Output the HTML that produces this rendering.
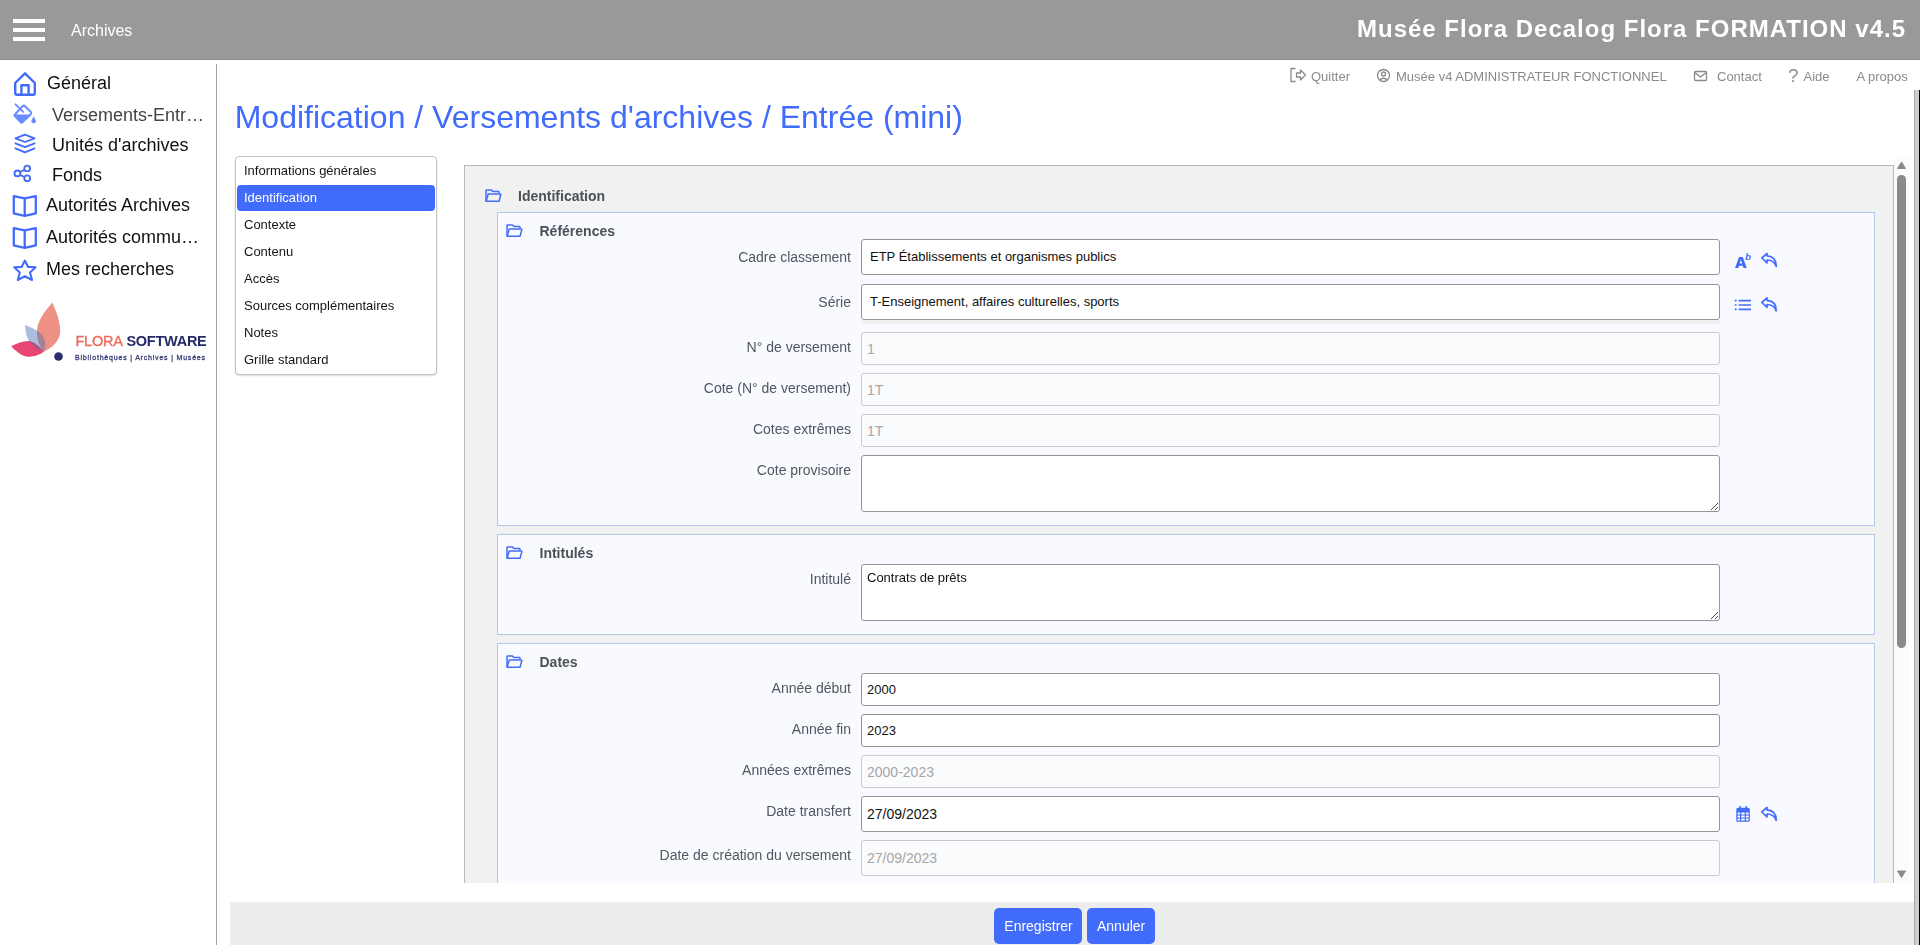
<!DOCTYPE html>
<html><head><meta charset="utf-8"><title>Flora</title>
<style>
html,body{margin:0;padding:0;}
body{width:1920px;height:945px;overflow:hidden;position:relative;background:#fff;font-family:"Liberation Sans",sans-serif;}
.t{position:absolute;white-space:nowrap;}
svg{overflow:visible}
</style></head><body>
<div style="position:absolute;left:0;top:0;width:1920px;height:60px;background:#999;"></div>
<div style="position:absolute;left:0;top:59px;width:1920px;height:1px;background:#8f8f8f;"></div>
<div style="position:absolute;left:13px;top:19px;width:32px;height:4px;background:#fff;"></div>
<div style="position:absolute;left:13px;top:28px;width:32px;height:4px;background:#fff;"></div>
<div style="position:absolute;left:13px;top:37px;width:32px;height:4px;background:#fff;"></div>
<div class="t" style="left:71px;top:23.46px;font-size:16px;line-height:16px;color:#fff;font-weight:normal;">Archives</div>

<div class="t" style="right:14px;top:16.68px;font-size:24px;line-height:24px;color:#fff;font-weight:bold;letter-spacing:1.0px;">Musée Flora Decalog Flora FORMATION v4.5</div>

<div style="position:absolute;left:216px;top:64px;width:1px;height:881px;background:#a3a3a3;"></div>
<div class="t" style="left:47px;top:73.76px;font-size:18px;line-height:18px;color:#111;font-weight:normal;">Général</div>

<div class="t" style="left:52px;top:105.76px;font-size:18px;line-height:18px;color:#444;font-weight:normal;">Versements-Entr…</div>

<div class="t" style="left:52px;top:135.76px;font-size:18px;line-height:18px;color:#111;font-weight:normal;">Unités d'archives</div>

<div class="t" style="left:52px;top:165.76px;font-size:18px;line-height:18px;color:#111;font-weight:normal;">Fonds</div>

<div class="t" style="left:46px;top:195.76px;font-size:18px;line-height:18px;color:#111;font-weight:normal;">Autorités Archives</div>

<div class="t" style="left:46px;top:227.76px;font-size:18px;line-height:18px;color:#111;font-weight:normal;">Autorités commu…</div>

<div class="t" style="left:46px;top:259.76px;font-size:18px;line-height:18px;color:#111;font-weight:normal;">Mes recherches</div>

<svg style="position:absolute;left:0;top:0" width="216" height="380" viewBox="0 0 216 380">
<g fill="none" stroke="#436cfb" stroke-width="2.4" stroke-linejoin="round" stroke-linecap="round">
 <path d="M17 94.8 Q15.2 94.8 15.2 93 V83 L25 73.3 L34.8 83 V93 Q34.8 94.8 33 94.8 Z"/>
 <path d="M21.4 94.8 V85.2 H28.6 V94.8"/>
</g>
<g fill="none" stroke="#6a8cff" stroke-width="2" stroke-linejoin="round" stroke-linecap="round">
 <path d="M15.6 104.4 L23.2 111.9"/>
 <path d="M22.6 106.2 Q23.8 105 25 106.2 L30.6 111.8 Q31.8 113 30.6 114.2 L22.8 121.9 Q21.6 123.1 20.4 121.9 L15.1 116.6 Q13.9 115.4 15.1 114.2 Z"/>
</g>
<path d="M14.6 115.2 L29.9 115.2 L21.6 123 Z" fill="#6a8cff" stroke="#6a8cff" stroke-width="1.5" stroke-linejoin="round"/>
<path d="M33.6 116.3 L35.6 119.9 Q36.4 121.6 35.5 122.6 Q33.6 124.2 31.7 122.6 Q30.8 121.6 31.6 119.9 Z" fill="#6a8cff"/>
<g fill="none" stroke="#436cfb" stroke-width="1.8" stroke-linejoin="round" stroke-linecap="round">
 <path d="M25 134.6 L34.6 138.3 L25 142 L15.4 138.3 Z"/>
 <path d="M15.4 143.3 L25 147.2 L34.6 143.3"/>
 <path d="M15.4 148.3 L25 152.4 L34.6 148.3"/>
</g>
<g fill="none" stroke="#436cfb" stroke-width="1.9">
 <circle cx="27.2" cy="168.5" r="2.9"/>
 <circle cx="17.4" cy="173.4" r="2.9"/>
 <circle cx="27.2" cy="178.3" r="2.9"/>
 <path d="M20 172 L24.6 169.8 M20 174.8 L24.6 177"/>
</g>
<g fill="none" stroke="#436cfb" stroke-width="2.3" stroke-linejoin="round">
 <path d="M13.8 196.2 L24.7 198.4 L35.8 196.2 V213.4 L24.7 215.8 L13.8 213.4 Z"/>
 <path d="M24.7 198.4 V215.8"/>
 <path d="M13.8 228.2 L24.7 230.4 L35.8 228.2 V245.4 L24.7 247.8 L13.8 245.4 Z"/>
 <path d="M24.7 230.4 V247.8"/>
</g>
<path fill="none" stroke="#436cfb" stroke-width="2.1" stroke-linejoin="round" d="M24.9 260.6 L28.1 266.9 L35.6 267.3 L30 272.6 L32 280 L24.9 276.2 L17.8 280 L19.8 272.6 L14.2 267.3 L21.7 266.9 Z"/>
</svg>
<svg style="position:absolute;left:0;top:290px" width="216" height="80" viewBox="0 290 216 80">
 <path d="M52.4 302.5 C48 308 38 318 37 330 C36.5 340 40 347 43.7 351.8 C52 348 60 341 60.2 331 C60.3 320 55 309 52.4 302.5 Z" fill="#ef9084"/>
 <path d="M11.1 346.3 C17 343.5 23 341 28 341 C34 341.5 40 346 43.7 351.8 C40 354.5 35 356.8 28 356.8 C21 356.5 15 350 11.1 346.3 Z" fill="#e94573"/>
 <path d="M25.1 324.9 C30 327 38 330 42 335 C46 340 46 347 43.7 351.8 C36 348 30 344 28 339 C26 335 25.3 330 25.1 324.9 Z" fill="#98acd6" style="mix-blend-mode:multiply" fill-opacity="0.7"/>
 <path d="M25.1 324.9 C30 327 38 330 42 335 C46 340 46 347 43.7 351.8 C36 348 30 344 28 339 C26 335 25.3 330 25.1 324.9 Z" fill="#98acd6" fill-opacity="0.3"/>
 <circle cx="58.5" cy="356.5" r="4.3" fill="#2b2e6c"/>
</svg>
<div class="t" style="left:75.5px;top:333.73px;font-size:14.5px;line-height:14.5px;color:#262b68;font-weight:bold;letter-spacing:-0.25px;"><span style="color:#ee6a5c;font-weight:normal;-webkit-text-stroke:0.35px #ee6a5c">FLORA</span> <span style="color:#262b68">SOFTWARE</span></div>

<div class="t" style="left:75px;top:353.57px;font-size:7px;line-height:7px;color:#3a3d78;font-weight:normal;letter-spacing:0.8px;-webkit-text-stroke:0.3px #3a3d78;">Bibliothèques | Archives | Musées</div>

<div class="t" style="left:1311px;top:70.00px;font-size:13px;line-height:13px;color:#8a8a8a;font-weight:normal;">Quitter</div>

<div class="t" style="left:1396px;top:70.00px;font-size:13px;line-height:13px;color:#8a8a8a;font-weight:normal;">Musée v4 ADMINISTRATEUR FONCTIONNEL</div>

<div class="t" style="left:1717px;top:70.00px;font-size:13px;line-height:13px;color:#8a8a8a;font-weight:normal;">Contact</div>

<div class="t" style="left:1788px;top:65.92px;font-size:19px;line-height:19px;color:#8a8a8a;font-weight:normal;">?</div>

<div class="t" style="left:1803.5px;top:70.00px;font-size:13px;line-height:13px;color:#8a8a8a;font-weight:normal;">Aide</div>

<div class="t" style="left:1856.5px;top:70.00px;font-size:13px;line-height:13px;color:#8a8a8a;font-weight:normal;">A propos</div>

<svg style="position:absolute;left:1280px;top:62px" width="440" height="30" viewBox="1280 62 440 30">
<g fill="none" stroke="#8a8a8a" stroke-width="1.3" stroke-linejoin="round">
 <path d="M1295.5 68.5 H1291 V81.5 H1295.5"/>
 <path d="M1296.5 73 H1300.5 V70 L1305.5 75 L1300.5 80 V77 H1296.5 Z"/>
 <circle cx="1383.5" cy="75.5" r="6"/>
 <circle cx="1383.5" cy="74" r="2"/>
 <path d="M1379.5 80 Q1383.5 76.5 1387.5 80"/>
 <rect x="1694.5" y="71.5" width="12" height="9" rx="1"/>
 <path d="M1694.8 72.5 L1700.5 77 L1706.2 72.5"/>
</g></svg>
<div class="t" style="left:234.7px;top:100.91px;font-size:32px;line-height:32px;color:#416bfb;font-weight:normal;">Modification / Versements d'archives / Entrée (mini)</div>

<div style="position:absolute;left:235px;top:156px;width:200px;height:217px;border:1px solid #c4c4c4;border-radius:4px;box-shadow:0 1px 2px rgba(0,0,0,0.15);background:#fff;"></div>
<div style="position:absolute;left:237px;top:185px;width:198px;height:26px;border-radius:4px;background:#416bfb;"></div>
<div class="t" style="left:244px;top:164.00px;font-size:13px;line-height:13px;color:#141414;font-weight:normal;">Informations générales</div>

<div class="t" style="left:244px;top:191.00px;font-size:13px;line-height:13px;color:#fff;font-weight:normal;">Identification</div>

<div class="t" style="left:244px;top:218.00px;font-size:13px;line-height:13px;color:#141414;font-weight:normal;">Contexte</div>

<div class="t" style="left:244px;top:245.00px;font-size:13px;line-height:13px;color:#141414;font-weight:normal;">Contenu</div>

<div class="t" style="left:244px;top:272.00px;font-size:13px;line-height:13px;color:#141414;font-weight:normal;">Accès</div>

<div class="t" style="left:244px;top:299.00px;font-size:13px;line-height:13px;color:#141414;font-weight:normal;">Sources complémentaires</div>

<div class="t" style="left:244px;top:326.00px;font-size:13px;line-height:13px;color:#141414;font-weight:normal;">Notes</div>

<div class="t" style="left:244px;top:353.00px;font-size:13px;line-height:13px;color:#141414;font-weight:normal;">Grille standard</div>

<div style="position:absolute;left:464px;top:165px;width:1428px;height:717px;border:1px solid #bababa;border-bottom:none;background:#f1f1f1;overflow:hidden;">
<div style="position:absolute;left:32px;top:46px;width:1376px;height:312px;border:1px solid #b2c9e8;background:#f8faff;"></div>
<div style="position:absolute;left:32px;top:368px;width:1376px;height:99px;border:1px solid #b2c9e8;background:#f8faff;"></div>
<div style="position:absolute;left:32px;top:477px;width:1376px;height:356px;border:1px solid #b2c9e8;background:#f8faff;"></div>
</div>
<svg style="position:absolute;left:485px;top:189px" width="17" height="14" viewBox="0 0 17 14"><g fill="none" stroke="#436cfb" stroke-width="1.5" stroke-linejoin="round"><path d="M1 12.2 V1.6 Q1 0.9 1.7 0.9 H6.5 L8 2.6 H13.3 Q14 2.6 14 3.3 V4.6"/><path d="M1.1 12.3 L3.3 4.9 H15.2 Q16 4.9 15.8 5.7 L14 12.3 Z"/></g></svg>
<svg style="position:absolute;left:506px;top:224px" width="17" height="14" viewBox="0 0 17 14"><g fill="none" stroke="#436cfb" stroke-width="1.5" stroke-linejoin="round"><path d="M1 12.2 V1.6 Q1 0.9 1.7 0.9 H6.5 L8 2.6 H13.3 Q14 2.6 14 3.3 V4.6"/><path d="M1.1 12.3 L3.3 4.9 H15.2 Q16 4.9 15.8 5.7 L14 12.3 Z"/></g></svg>
<svg style="position:absolute;left:506px;top:546px" width="17" height="14" viewBox="0 0 17 14"><g fill="none" stroke="#436cfb" stroke-width="1.5" stroke-linejoin="round"><path d="M1 12.2 V1.6 Q1 0.9 1.7 0.9 H6.5 L8 2.6 H13.3 Q14 2.6 14 3.3 V4.6"/><path d="M1.1 12.3 L3.3 4.9 H15.2 Q16 4.9 15.8 5.7 L14 12.3 Z"/></g></svg>
<svg style="position:absolute;left:506px;top:655px" width="17" height="14" viewBox="0 0 17 14"><g fill="none" stroke="#436cfb" stroke-width="1.5" stroke-linejoin="round"><path d="M1 12.2 V1.6 Q1 0.9 1.7 0.9 H6.5 L8 2.6 H13.3 Q14 2.6 14 3.3 V4.6"/><path d="M1.1 12.3 L3.3 4.9 H15.2 Q16 4.9 15.8 5.7 L14 12.3 Z"/></g></svg>
<div class="t" style="left:518px;top:189.15px;font-size:14px;line-height:14px;color:#4b5157;font-weight:bold;">Identification</div>

<div class="t" style="left:539.5px;top:224.15px;font-size:14px;line-height:14px;color:#4b5157;font-weight:bold;">Références</div>

<div class="t" style="left:539.5px;top:546.15px;font-size:14px;line-height:14px;color:#4b5157;font-weight:bold;">Intitulés</div>

<div class="t" style="left:539.5px;top:655.15px;font-size:14px;line-height:14px;color:#4b5157;font-weight:bold;">Dates</div>

<div class="t" style="right:1069px;top:250.15px;font-size:14px;line-height:14px;color:#51575e;font-weight:normal;">Cadre classement</div>
<div style="position:absolute;left:861px;top:239px;width:857px;height:34px;border:1px solid #959595;border-radius:3px;background:#fff;"></div><div class="t" style="left:870px;top:249.50px;font-size:13px;line-height:13px;color:#111;font-weight:normal;">ETP Établissements et organismes publics</div>

<div class="t" style="right:1069px;top:295.15px;font-size:14px;line-height:14px;color:#51575e;font-weight:normal;">Série</div>
<div style="position:absolute;left:861px;top:284px;width:857px;height:34px;border:1px solid #959595;border-radius:3px;background:#fff;"></div><div class="t" style="left:870px;top:295.00px;font-size:13px;line-height:13px;color:#111;font-weight:normal;">T-Enseignement, affaires culturelles, sports</div>

<div style="position:absolute;left:861px;top:320px;width:859px;height:4px;background:#f1f1f2;"></div>
<div class="t" style="right:1069px;top:340.15px;font-size:14px;line-height:14px;color:#51575e;font-weight:normal;">N° de versement</div>
<div style="position:absolute;left:861px;top:332px;width:857px;height:31px;border:1px solid #c9cbce;border-radius:3px;background:#fafbfd;"></div><div class="t" style="left:867px;top:342.15px;font-size:14px;line-height:14px;color:#a6a6a6;font-weight:normal;">1</div>

<div class="t" style="right:1069px;top:381.15px;font-size:14px;line-height:14px;color:#51575e;font-weight:normal;">Cote (N° de versement)</div>
<div style="position:absolute;left:861px;top:373px;width:857px;height:31px;border:1px solid #c9cbce;border-radius:3px;background:#fafbfd;"></div><div class="t" style="left:867px;top:383.15px;font-size:14px;line-height:14px;color:#a6a6a6;font-weight:normal;">1T</div>

<div class="t" style="right:1069px;top:422.15px;font-size:14px;line-height:14px;color:#51575e;font-weight:normal;">Cotes extrêmes</div>
<div style="position:absolute;left:861px;top:414px;width:857px;height:31px;border:1px solid #c9cbce;border-radius:3px;background:#fafbfd;"></div><div class="t" style="left:867px;top:424.15px;font-size:14px;line-height:14px;color:#a6a6a6;font-weight:normal;">1T</div>

<div class="t" style="right:1069px;top:463.15px;font-size:14px;line-height:14px;color:#51575e;font-weight:normal;">Cote provisoire</div>
<div style="position:absolute;left:861px;top:455px;width:857px;height:55px;border:1px solid #959595;border-radius:3px;background:#fff;"></div><svg style="position:absolute;left:0;top:0" width="1920" height="945" viewBox="0 0 1920 945" shape-rendering="crispEdges"><g fill="#4a4a4a"><rect x="1711" y="509" width="1" height="1"/><rect x="1712" y="508" width="1" height="1"/><rect x="1713" y="507" width="1" height="1"/><rect x="1714" y="506" width="1" height="1"/><rect x="1715" y="505" width="1" height="1"/><rect x="1716" y="504" width="1" height="1"/><rect x="1717" y="503" width="1" height="1"/><rect x="1715" y="509" width="1" height="1"/><rect x="1716" y="508" width="1" height="1"/><rect x="1717" y="507" width="1" height="1"/></g></svg>
<div class="t" style="right:1069px;top:572.15px;font-size:14px;line-height:14px;color:#51575e;font-weight:normal;">Intitulé</div>
<div style="position:absolute;left:861px;top:564px;width:857px;height:55px;border:1px solid #959595;border-radius:3px;background:#fff;"></div><svg style="position:absolute;left:0;top:0" width="1920" height="945" viewBox="0 0 1920 945" shape-rendering="crispEdges"><g fill="#4a4a4a"><rect x="1711" y="618" width="1" height="1"/><rect x="1712" y="617" width="1" height="1"/><rect x="1713" y="616" width="1" height="1"/><rect x="1714" y="615" width="1" height="1"/><rect x="1715" y="614" width="1" height="1"/><rect x="1716" y="613" width="1" height="1"/><rect x="1717" y="612" width="1" height="1"/><rect x="1715" y="618" width="1" height="1"/><rect x="1716" y="617" width="1" height="1"/><rect x="1717" y="616" width="1" height="1"/></g></svg><div class="t" style="left:867px;top:571.00px;font-size:13px;line-height:13px;color:#111;font-weight:normal;">Contrats de prêts</div>

<div class="t" style="right:1069px;top:681.15px;font-size:14px;line-height:14px;color:#51575e;font-weight:normal;">Année début</div>
<div style="position:absolute;left:861px;top:673px;width:857px;height:31px;border:1px solid #959595;border-radius:3px;background:#fff;"></div><div class="t" style="left:867px;top:683.00px;font-size:13px;line-height:13px;color:#111;font-weight:normal;">2000</div>

<div class="t" style="right:1069px;top:722.15px;font-size:14px;line-height:14px;color:#51575e;font-weight:normal;">Année fin</div>
<div style="position:absolute;left:861px;top:714px;width:857px;height:31px;border:1px solid #959595;border-radius:3px;background:#fff;"></div><div class="t" style="left:867px;top:724.00px;font-size:13px;line-height:13px;color:#111;font-weight:normal;">2023</div>

<div class="t" style="right:1069px;top:763.15px;font-size:14px;line-height:14px;color:#51575e;font-weight:normal;">Années extrêmes</div>
<div style="position:absolute;left:861px;top:755px;width:857px;height:31px;border:1px solid #c9cbce;border-radius:3px;background:#fafbfd;"></div><div class="t" style="left:867px;top:765.15px;font-size:14px;line-height:14px;color:#a6a6a6;font-weight:normal;">2000-2023</div>

<div class="t" style="right:1069px;top:804.15px;font-size:14px;line-height:14px;color:#51575e;font-weight:normal;">Date transfert</div>
<div style="position:absolute;left:861px;top:796px;width:857px;height:34px;border:1px solid #959595;border-radius:3px;background:#fff;"></div><div class="t" style="left:867px;top:807.15px;font-size:14px;line-height:14px;color:#111;font-weight:normal;">27/09/2023</div>

<div class="t" style="right:1069px;top:848.15px;font-size:14px;line-height:14px;color:#51575e;font-weight:normal;">Date de création du versement</div>
<div style="position:absolute;left:861px;top:840px;width:857px;height:34px;border:1px solid #c9cbce;border-radius:3px;background:#fafbfd;"></div><div class="t" style="left:867px;top:851.15px;font-size:14px;line-height:14px;color:#a6a6a6;font-weight:normal;">27/09/2023</div>

<svg style="position:absolute;left:1725px;top:245px" width="60" height="600" viewBox="1725 245 60 600">
<path fill-rule="evenodd" fill="#436cfb" d="M1735 268 L1739.1 257 H1742.7 L1746.8 268 H1743.5 L1742.8 265.8 H1739 L1738.3 268 Z M1739.7 263.4 H1742.1 L1740.9 259.6 Z"/>
<text x="1745.2" y="259.8" font-family="Liberation Sans" font-style="italic" font-weight="bold" font-size="9.5" fill="#436cfb">b</text>
<path d="M1761.8 258 L1767 253.39999999999998 V255.79999999999995 Q1776.6 256.6 1776.2 266.4 Q1774 260 1767 260 V262.79999999999995 Z" fill="none" stroke="#436cfb" stroke-width="1.7" stroke-linejoin="round"/>
<path d="M1761.8 302.5 L1767 297.9 V300.29999999999995 Q1776.6 301.1 1776.2 310.9 Q1774 304.5 1767 304.5 V307.29999999999995 Z" fill="none" stroke="#436cfb" stroke-width="1.7" stroke-linejoin="round"/>
<path d="M1761.8 812 L1767 807.4 V809.8 Q1776.6 810.6 1776.2 820.4 Q1774 814 1767 814 V816.8 Z" fill="none" stroke="#436cfb" stroke-width="1.7" stroke-linejoin="round"/>
<g stroke="#436cfb" stroke-width="1.7">
 <path d="M1738.6 300.6 H1751 M1738.6 305 H1751 M1738.6 309.4 H1751"/>
 <path d="M1734.8 300.6 H1736.6 M1734.8 305 H1736.6 M1734.8 309.4 H1736.6"/>
</g>
<rect x="1736.3" y="807.8" width="13.5" height="14" rx="1.6" fill="#436cfb"/>
<path d="M1740.2 806 V809 M1746.2 806 V809" stroke="#436cfb" stroke-width="1.5"/>
<rect x="1737.6" y="812.4" width="2.4" height="2.1" rx="0.6" fill="#fff"/><rect x="1741.2" y="812.4" width="3.6" height="2.1" rx="0.6" fill="#fff"/><rect x="1746" y="812.4" width="2.6" height="2.1" rx="0.6" fill="#fff"/><rect x="1737.6" y="815.4" width="2.4" height="2.1" rx="0.6" fill="#fff"/><rect x="1741.2" y="815.4" width="3.6" height="2.1" rx="0.6" fill="#fff"/><rect x="1746" y="815.4" width="2.6" height="2.1" rx="0.6" fill="#fff"/><rect x="1737.6" y="818.4" width="2.4" height="2.1" rx="0.6" fill="#fff"/><rect x="1741.2" y="818.4" width="3.6" height="2.1" rx="0.6" fill="#fff"/><rect x="1746" y="818.4" width="2.6" height="2.1" rx="0.6" fill="#fff"/>
</svg>
<div style="position:absolute;left:1894px;top:157px;width:15px;height:725px;background:#fbfbfb;"></div>
<svg style="position:absolute;left:1894px;top:157px" width="15" height="725" viewBox="0 0 15 725"><path d="M3.5 11.5 L7.5 5 L11.5 11.5 Z" fill="#8a8a8a" stroke="#8a8a8a" stroke-width="1" stroke-linejoin="round"/><path d="M3.5 714 L7.5 720.5 L11.5 714 Z" fill="#8a8a8a" stroke="#8a8a8a" stroke-width="1" stroke-linejoin="round"/></svg>
<div style="position:absolute;left:1897px;top:175px;width:9px;height:473px;border-radius:4.5px;background:#8a8a8a;"></div>
<div style="position:absolute;left:1914px;top:90px;width:1px;height:855px;background:#a8a8a8;"></div>
<div style="position:absolute;left:1915px;top:90px;width:4px;height:855px;background:#cdcdcd;"></div>
<div style="position:absolute;left:1919px;top:90px;width:1px;height:855px;background:#000;"></div>
<div style="position:absolute;left:230px;top:902px;width:1684px;height:43px;background:#ececec;"></div>
<div style="position:absolute;left:994px;top:908px;width:88px;height:36px;border-radius:5px;background:#416bfb;"></div>
<div style="position:absolute;left:1087px;top:908px;width:68px;height:36px;border-radius:5px;background:#416bfb;"></div>
<div class="t" style="left:1004.3px;top:919.15px;font-size:14px;line-height:14px;color:#fff;font-weight:normal;">Enregistrer</div>

<div class="t" style="left:1097px;top:919.15px;font-size:14px;line-height:14px;color:#fff;font-weight:normal;">Annuler</div>

</body></html>
